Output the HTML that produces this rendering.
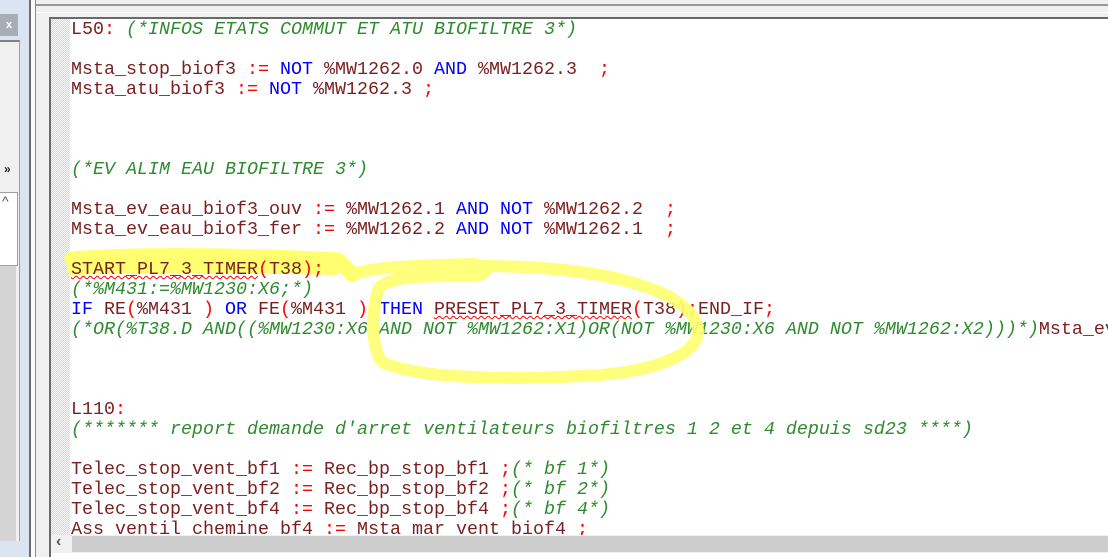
<!DOCTYPE html>
<html><head><meta charset="utf-8"><style>
*{margin:0;padding:0;box-sizing:border-box}
body{width:1108px;height:557px;overflow:hidden;background:#f0f0f0;position:relative;font-family:"Liberation Mono",monospace}
.a{position:absolute}
.ln{position:absolute;left:71px;height:20px;line-height:20px;font-size:18.33px;white-space:pre;color:#7a1f1f}
.r{color:#ff0000}.b{color:#0000ff}.c{color:#2e8b2e;font-style:italic}
.w{text-decoration:underline wavy #ff0000;text-decoration-thickness:1px}
</style></head><body>
<!-- left panel -->
<div class="a" style="left:0;top:0;width:29px;height:557px;background:#dbe5f1"></div>
<div class="a" style="left:0;top:14px;width:18px;height:22px;background:#a6adb5;color:#fff;font:bold 11px 'Liberation Sans',sans-serif;text-align:center;line-height:22px">x</div>
<div class="a" style="left:0;top:40px;width:20px;height:501px;background:#f0f0f0;border-top:2px solid #808080;border-right:1px solid #a0a0a0"></div>
<div class="a" style="left:4px;top:162px;font:bold 12px 'Liberation Sans',sans-serif;color:#222">»</div>
<div class="a" style="left:0;top:192px;width:18px;height:74px;background:#fff;border:1px solid #a0a0a0;border-left:none"></div>
<div class="a" style="left:2px;top:193px;font:14px 'Liberation Sans',sans-serif;color:#555">^</div>
<div class="a" style="left:0;top:266px;width:16px;height:275px;background:#d4d4d4"></div>
<div class="a" style="left:29px;top:0;width:2px;height:557px;background:#6e6e6e"></div>
<div class="a" style="left:31px;top:0;width:4px;height:557px;background:#fafafa"></div>
<div class="a" style="left:35px;top:0;width:1px;height:557px;background:#8a8a8a"></div>
<!-- editor frame -->
<div class="a" style="left:36px;top:4px;width:1072px;height:2px;background:#999"></div>
<div class="a" style="left:36px;top:12px;width:1072px;height:1px;background:#fff"></div>
<div class="a" style="left:49px;top:17px;width:1059px;height:2px;background:#6a6a6a"></div>
<div class="a" style="left:49px;top:17px;width:2px;height:540px;background:#6a6a6a"></div>
<div class="a" style="left:51px;top:19px;width:1057px;height:516px;background:#fff"></div>
<div class="a" style="left:51px;top:19px;width:19px;height:516px;background-color:#f4f4f4;background-image:repeating-conic-gradient(#d8d8d8 0 25%,#f8f8f8 0 50%);background-size:2px 2px"></div>
<!-- scrollbar -->
<div class="a" style="left:51px;top:535px;width:1057px;height:18px;background:#f0f0f0"></div>
<div class="a" style="left:72px;top:536px;width:1036px;height:16px;background:#cdcdcd"></div>
<div class="a" style="left:56px;top:533px;font:bold 16px 'Liberation Sans',sans-serif;color:#555">‹</div>
<div class="a" style="left:51px;top:553px;width:1057px;height:4px;background:#fff"></div>
<!-- highlight band behind text -->
<svg class="a" style="left:0;top:0" width="1108" height="535" viewBox="0 0 1108 535">
<g fill="none" stroke="#ffff70" stroke-linecap="round" stroke-linejoin="round">
<path d="M72 259 C150 253 260 256 338 260 L352 274" stroke-width="15"/>
<path d="M72 270 C150 267 250 268 335 270" stroke-width="10"/>
</g>
</svg>
<!-- code -->
<div class="ln" style="top:20px">L50<span class="r">:</span> <span class="c">(*INFOS ETATS COMMUT ET ATU BIOFILTRE 3*)</span></div>
<div class="ln" style="top:60px">Msta_stop_biof3 <span class="r">:=</span> <span class="b">NOT</span> %MW1262.0 <span class="b">AND</span> %MW1262.3  <span class="r">;</span></div>
<div class="ln" style="top:80px">Msta_atu_biof3 <span class="r">:=</span> <span class="b">NOT</span> %MW1262.3 <span class="r">;</span></div>
<div class="ln" style="top:160px"><span class="c">(*EV ALIM EAU BIOFILTRE 3*)</span></div>
<div class="ln" style="top:200px">Msta_ev_eau_biof3_ouv <span class="r">:=</span> %MW1262.1 <span class="b">AND</span> <span class="b">NOT</span> %MW1262.2  <span class="r">;</span></div>
<div class="ln" style="top:220px">Msta_ev_eau_biof3_fer <span class="r">:=</span> %MW1262.2 <span class="b">AND</span> <span class="b">NOT</span> %MW1262.1  <span class="r">;</span></div>
<div class="ln" style="top:260px"><span class="w">START_PL7_3_TIMER</span><span class="r">(</span>T38<span class="r">);</span></div>
<div class="ln" style="top:280px"><span class="c">(*%M431:=%MW1230:X6;*)</span></div>
<div class="ln" style="top:300px"><span class="b">IF</span> RE<span class="r">(</span>%M431 <span class="r">)</span> <span class="b">OR</span> FE<span class="r">(</span>%M431 <span class="r">)</span> <span class="b">THEN</span> <span class="w">PRESET_PL7_3_TIMER</span><span class="r">(</span>T38<span class="r">);</span>END_IF<span class="r">;</span></div>
<div class="ln" style="top:320px"><span class="c">(*OR(%T38.D AND((%MW1230:X6 AND NOT %MW1262:X1)OR(NOT %MW1230:X6 AND NOT %MW1262:X2)))*)</span>Msta_ev_eau</div>
<div class="ln" style="top:400px">L110<span class="r">:</span></div>
<div class="ln" style="top:420px"><span class="c">(******* report demande d'arret ventilateurs biofiltres 1 2 et 4 depuis sd23 ****)</span></div>
<div class="ln" style="top:460px">Telec_stop_vent_bf1 <span class="r">:=</span> Rec_bp_stop_bf1 <span class="r">;</span><span class="c">(* bf 1*)</span></div>
<div class="ln" style="top:480px">Telec_stop_vent_bf2 <span class="r">:=</span> Rec_bp_stop_bf2 <span class="r">;</span><span class="c">(* bf 2*)</span></div>
<div class="ln" style="top:500px">Telec_stop_vent_bf4 <span class="r">:=</span> Rec_bp_stop_bf4 <span class="r">;</span><span class="c">(* bf 4*)</span></div>
<div class="ln" style="top:520px;height:15px;overflow:hidden">Ass_ventil_chemine_bf4 <span class="r">:=</span> Msta_mar_vent_biof4 <span class="r">;</span></div>
<!-- ellipse on top -->
<svg class="a" style="left:0;top:0" width="1108" height="535" viewBox="0 0 1108 535">
<g fill="none" stroke="#ffff70" stroke-opacity="0.9" stroke-linecap="round" stroke-linejoin="round">
<path d="M352 276 C362 268 400 266 470 264 C490 264 492 276 470 276 C420 276 385 276 378 290 C372 310 370 345 382 362 C420 380 520 380 600 375 C660 370 700 352 698 330 C695 305 660 290 630 282 C590 270 530 266 480 266" stroke-width="12"/>
</g>
</svg>
</body></html>
